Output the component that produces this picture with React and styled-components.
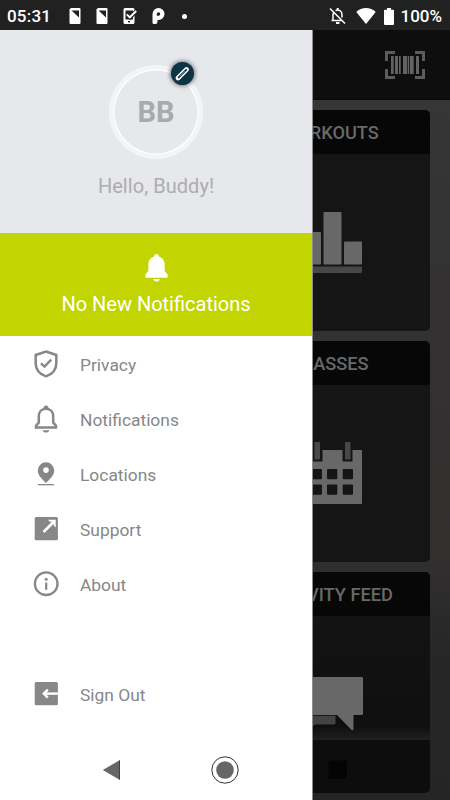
import React from 'react';
import styled, { createGlobalStyle } from 'styled-components';

const GlobalStyle = createGlobalStyle`
  * {
    box-sizing: border-box;
  }
  body {
    margin: 0;
    font-family: Roboto, 'Liberation Sans', sans-serif;
  }
`;

const StyledScreen = styled.div`
  position: relative;
  display: flex;
  flex-direction: column;
  width: 450px;
  height: 800px;
  overflow: hidden;
  background-color: #2b2b2b;
`;

const StyledStatusBar = styled.div`
  display: flex;
  align-items: center;
  justify-content: space-between;
  flex-shrink: 0;
  height: 30px;
  padding: 2px 8px 0 7px;
  background-color: #212121;
  color: #fff;
  font-size: 17px;
  font-weight: 500;
  line-height: 28px;
`;

const StyledStatusGroup = styled.div`
  display: flex;
  align-items: center;

  svg {
    display: block;
  }
`;

const StyledTime = styled.span`
  width: 60px;
  letter-spacing: 0.2px;
`;

const StyledTrayIcons = styled(StyledStatusGroup)`
  gap: 15px;
  margin-left: 1.5px;
`;

const StyledDot = styled.span`
  width: 5px;
  height: 5px;
  margin-left: 2px;
  border-radius: 50%;
  background-color: #fff;
`;

const StyledIndicators = styled(StyledStatusGroup)`
  gap: 8px;

  svg:first-child {
    margin-right: 2px;
  }
  svg + span {
    margin-left: -2px;
  }
`;

const StyledAppHeader = styled.div`
  display: flex;
  flex-shrink: 0;
  align-items: center;
  justify-content: flex-end;
  height: 70px;
  padding-right: 25px;
  background-color: #0e0e0e;
  border-bottom: 1px solid #080808;
`;

const StyledDashboard = styled.div`
  display: flex;
  flex: 1;
  flex-direction: column;
  align-items: flex-end;
  gap: 10px;
  padding: 10px 20px 7px 0;
  background: linear-gradient(#363636 0, #333131 30%, #322f2f 65%, #262626 80%, #252525 100%);
`;

const StyledCard = styled.div`
  display: flex;
  flex-direction: column;
  width: 200px;
  height: 221px;
  overflow: hidden;
  border-radius: 5px;
  background: ${(props) => props.$background || '#151515'};
`;

const StyledCardTitle = styled.div`
  height: 44px;
  background-color: #070707;
  color: #696969;
  font-size: 18.2px;
  font-weight: 500;
  line-height: 46px;
  text-align: center;
  white-space: nowrap;
`;

const StyledCardBody = styled.div`
  display: flex;
  justify-content: center;
  padding-top: ${(props) => props.$top}px;
`;

const StyledDrawer = styled.div`
  position: absolute;
  top: 30px;
  left: 0;
  bottom: 0;
  display: flex;
  flex-direction: column;
  width: 313px;
  background-color: #fff;
  border-right: 1px solid rgba(0, 0, 0, 0.45);
`;

const StyledProfile = styled.div`
  display: flex;
  flex-direction: column;
  align-items: center;
  height: 203px;
  padding-top: 35px;
  background-color: #e7e8ec;
`;

const StyledAvatar = styled.div`
  position: relative;
  display: flex;
  align-items: center;
  justify-content: center;
  width: 94px;
  height: 94px;
  border: 4px solid #f3f4f6;
  border-radius: 50%;
  box-shadow: inset 0 0 0 1.5px #fff;
  color: #a9aaab;
  font-size: 29px;
  font-weight: 700;
`;

const StyledEditBadge = styled.div`
  position: absolute;
  top: -7px;
  right: 5px;
  display: flex;
  align-items: center;
  justify-content: center;
  width: 23px;
  height: 23px;
  border-radius: 50%;
  background-color: #0d3344;
  box-shadow: 0 0 4px 1px rgba(0, 0, 0, 0.5);
`;

const StyledGreeting = styled.div`
  margin-top: 15px;
  color: #adadae;
  font-size: 20px;
  line-height: 24px;
  letter-spacing: 0.05px;
`;

const StyledNotice = styled.div`
  display: flex;
  flex-direction: column;
  align-items: center;
  height: 103px;
  padding-top: 21px;
  background-color: #c2d500;
  color: #fff;
  font-size: 20px;
  line-height: 24px;
`;

const StyledNoticeText = styled.div`
  margin-top: 10px;
`;

const StyledMenu = styled.div`
  display: flex;
  flex-direction: column;
`;

const StyledMenuItem = styled.div`
  display: flex;
  align-items: center;
  height: 55px;
  margin-top: ${(props) => props.$gap || 0}px;
  padding-left: 32px;
  color: #868788;
  font-size: 17.4px;

  svg {
    flex-shrink: 0;
    margin-right: 20px;
  }
`;

const StyledMenuLabel = styled.span`
  padding-top: 2px;
`;

const StyledNavBar = styled.div`
  position: absolute;
  left: 0;
  right: 0;
  bottom: 0;
  display: flex;
  align-items: center;
  justify-content: space-between;
  height: 60px;
  padding: 0 102px;
`;

const SimIcon = () => (
  <svg width="12" height="16" viewBox="0 0 12 16">
    <path d="M2 0h8.500a1 1 0 0 1 1 1v14a1 1 0 0 1-1 1H1.500a1 1 0 0 1-1-1V1.500z" fill="#fff" />
    <path d="M2.500 2.500H10v7z" fill="#212121" />
  </svg>
);

const PhoneCheckIcon = () => (
  <svg width="14" height="16" viewBox="0 0 14 16">
    <path
      fillRule="evenodd"
      d="M2 0h8a1.500 1.500 0 0 1 1.500 1.500v13A1.500 1.500 0 0 1 10 16H2a1.500 1.500 0 0 1-1.500-1.500v-13A1.500 1.500 0 0 1 2 0zM2.500 2.500v9H10v-9z"
      fill="#fff"
    />
    <path d="M4 6.500l3 3 6.500-6.500" fill="none" stroke="#212121" strokeWidth="4" />
    <path d="M3.800 6.300l3 3L13.200 3" fill="none" stroke="#fff" strokeWidth="1.900" />
    <rect x="5" y="13" width="2" height="1.400" fill="#212121" />
  </svg>
);

const ParkIcon = () => (
  <svg width="13" height="16" viewBox="0 0 13 16">
    <path
      fillRule="evenodd"
      d="M6.500 0a6 6 0 0 1 0 12H5.500v2a2 2 0 0 1-2 2H1.500A1.500 1.500 0 0 1 .5 14.500V6a6 6 0 0 1 6-6zM6.500 4.300A1.700 1.700 0 0 0 4.800 6v1.700h1.700a1.700 1.700 0 0 0 0-3.400z"
      fill="#fff"
    />
  </svg>
);

const BellOffIcon = () => (
  <svg width="17" height="18" viewBox="0 0 17 18" fill="none" stroke="#fff" strokeWidth="1.500">
    <path d="M4 13V8a4.600 4.600 0 0 1 .8-2.700M6.500 3.600A4.300 4.300 0 0 1 13 7.500v3M2.500 13.500h10" />
    <path d="M8.700 1v2" strokeWidth="2" />
    <path d="M7 16h3.400" strokeWidth="2" />
    <path d="M1 1.500L16 16.500" />
  </svg>
);

const WifiIcon = () => (
  <svg width="20" height="16" viewBox="0 0 20 16">
    <path d="M10 16L.3 4C3 1.300 6.300 0 10 0s7 1.300 9.700 4z" fill="#fff" />
  </svg>
);

const BatteryIcon = () => (
  <svg width="10" height="17" viewBox="0 0 10 17">
    <path
      d="M3 0h4v1.700h2a1 1 0 0 1 1 1V16a1 1 0 0 1-1 1H1a1 1 0 0 1-1-1V2.700a1 1 0 0 1 1-1h2z"
      fill="#fff"
    />
  </svg>
);

const BarcodeIcon = () => (
  <svg width="40" height="28" viewBox="0 0 40 28" fill="#636363">
    <path
      d="M0 10V0h10v3H3v7zM30 0h10v10h-3V3h-7zM3 18v7h7v3H0V18zM37 18h3v10H30v-3h7z"
      fill="#5c5c5c"
    />
    <rect x="6" y="5" width="2.700" height="18" />
    <rect x="10" y="5" width="3" height="18" />
    <rect x="14" y="5" width="1.700" height="18" />
    <rect x="18" y="5" width="4" height="18" />
    <rect x="22.700" y="5" width="1.500" height="18" />
    <rect x="25" y="5" width="3.700" height="18" />
    <rect x="31" y="5" width="3" height="18" />
  </svg>
);

const ChartIcon = () => (
  <svg width="64" height="61" viewBox="0 0 64 61" fill="#686868">
    <rect x="3" y="20" width="20" height="32.500" rx="1" />
    <rect x="25.500" y="0" width="18" height="52.500" rx="1" />
    <rect x="46" y="29.500" width="18" height="23" rx="1" />
    <rect x="0" y="54.500" width="64" height="6.500" rx="1" fill="#474747" />
  </svg>
);

const CalendarIcon = () => (
  <svg width="64" height="62" viewBox="0 0 64 62">
    <rect y="8" width="64" height="54" rx="1" fill="#686868" />
    <g fill="#151515">
      <rect x="14" y="7" width="10.500" height="12.500" />
      <rect x="44.500" y="7" width="10" height="12.500" />
      {[27, 42.5].map((y) =>
        [13.7, 29, 44.7].map((x) => (
          <rect key={`${x}-${y}`} x={x} y={y} width="10.300" height="10.300" rx="1" />
        ))
      )}
    </g>
    <rect x="16.500" y="0" width="5.500" height="17.500" rx="1" fill="#484848" />
    <rect x="47" y="0" width="5.500" height="17.500" rx="1" fill="#484848" />
  </svg>
);

const ChatIcon = () => (
  <svg width="66" height="56" viewBox="0 0 66 56">
    <path d="M1 24h37.500v22a1.500 1.500 0 0 1-1.500 1.500H18L10 55V47.500H1z" fill="#434343" />
    <path
      d="M15 0h50a1 1 0 0 1 1 1v36a1 1 0 0 1-1 1h-8.500v14.500q-1 1.500-2.500 0L40 38H15z"
      fill="#686868"
      stroke="#0c0c0c"
      strokeWidth="1.500"
      paintOrder="stroke"
    />
  </svg>
);

const PencilIcon = () => (
  <svg width="15" height="15" viewBox="0 0 15 15" fill="none">
    <path d="M3 12l8.500-8.500" stroke="#fff" strokeWidth="4.600" strokeLinecap="round" />
    <path d="M3.600 11.400l7.600-7.600" stroke="#0d3344" strokeWidth="1.900" strokeLinecap="round" />
    <path d="M4.500 10.500l5.500-5.500" stroke="#8fa0a8" strokeWidth=".6" />
  </svg>
);

const BellIcon = () => (
  <svg width="23" height="28" viewBox="0 0 24 29" fill="#fff">
    <path d="M9.500 2.500a2.500 2.500 0 0 1 5 0C18.500 3.700 20.500 7 20.500 11v6.700l3 3.300v3.700H.5V21l3-3.300V11c0-4 2-7.300 6-8.500z" />
    <path d="M8.500 25.900h7c-.5 1.600-1.900 2.800-3.500 2.800s-3-1.200-3.500-2.800z" />
  </svg>
);

const ShieldIcon = () => (
  <svg width="28" height="28" viewBox="0 0 28 28" fill="none" stroke="currentColor">
    <path
      d="M14 1.500L24.300 5v8.500c0 6-4.300 10.700-10.300 12.900C8 24.200 3.700 19.500 3.700 13.500V5z"
      strokeWidth="2.500"
    />
    <path d="M9 13.300l3.500 3.300 6.700-7" strokeWidth="2.400" />
  </svg>
);

const BellOutlineIcon = () => (
  <svg width="28" height="28" viewBox="0 0 28 28" fill="none" stroke="currentColor">
    <path
      d="M4 22.600v-1.800l2.800-3.300V11.500c0-4.500 2.800-7.700 7.200-7.700s7.200 3.200 7.200 7.700v6l2.800 3.300v1.800z"
      strokeWidth="2.500"
    />
    <path d="M11.500 3a2.500 2.500 0 0 1 5 0z" fill="currentColor" stroke="none" />
    <path d="M10.500 25.200h7c-.6 1.500-2 2.300-3.500 2.300s-2.900-.8-3.500-2.300z" fill="currentColor" stroke="none" />
  </svg>
);

const PinIcon = () => (
  <svg width="28" height="28" viewBox="0 0 28 28" fill="currentColor">
    <path
      fillRule="evenodd"
      d="M14 2.300a8.200 8.200 0 0 1 8.200 8.200c0 5.300-5.200 9-8.200 12.800-3-3.800-8.200-7.500-8.200-12.800A8.200 8.200 0 0 1 14 2.300zm0 5a2.800 2.800 0 1 0 0 5.600 2.800 2.800 0 0 0 0-5.600z"
    />
    <rect x="6" y="24" width="16" height="1.300" />
  </svg>
);

const ExternalIcon = () => (
  <svg width="28" height="28" viewBox="0 0 28 28">
    <rect x="2.700" y="2" width="23.200" height="23.200" rx="1.500" fill="currentColor" />
    <path d="M11.500 17L22 6.500" fill="none" stroke="#fff" strokeWidth="2.600" />
    <path d="M16 4.800h7.700v7.700l-2-2V6.800H18z" fill="#fff" />
  </svg>
);

const InfoIcon = () => (
  <svg width="28" height="28" viewBox="0 0 28 28">
    <circle cx="14.200" cy="13.700" r="11.300" fill="none" stroke="currentColor" strokeWidth="2.300" />
    <rect x="13.100" y="12.500" width="2.200" height="7.300" fill="currentColor" />
    <circle cx="14.200" cy="9.200" r="1.500" fill="currentColor" />
  </svg>
);

const SignOutIcon = () => (
  <svg width="28" height="28" viewBox="0 0 28 28">
    <rect x="2.700" y="2" width="23.200" height="23.200" rx="1.500" fill="currentColor" />
    <path d="M12 13.600h14.500" fill="none" stroke="#fff" strokeWidth="2.400" />
    <path d="M15.800 9.600l-4 4 4 4" fill="none" stroke="#fff" strokeWidth="2.400" />
  </svg>
);

const menuItems = [
  { label: 'Privacy', Icon: ShieldIcon },
  { label: 'Notifications', Icon: BellOutlineIcon },
  { label: 'Locations', Icon: PinIcon },
  { label: 'Support', Icon: ExternalIcon },
  { label: 'About', Icon: InfoIcon },
  { label: 'Sign Out', Icon: SignOutIcon, gap: 55 },
];

const cards = [
  { title: 'WORKOUTS', Icon: ChartIcon, top: 58 },
  { title: 'CLASSES', Icon: CalendarIcon, top: 57 },
  {
    title: 'ACTIVITY FEED',
    Icon: ChatIcon,
    top: 61,
    background: 'linear-gradient(#151515 0, #0f0f0f 154px, #202020 168px, #0d0d0d 168px)',
  },
];

const StatusBar = () => (
  <StyledStatusBar>
    <StyledStatusGroup>
      <StyledTime>05:31</StyledTime>
      <StyledTrayIcons>
        <SimIcon />
        <SimIcon />
        <PhoneCheckIcon />
        <ParkIcon />
        <StyledDot />
      </StyledTrayIcons>
    </StyledStatusGroup>
    <StyledIndicators>
      <BellOffIcon />
      <WifiIcon />
      <BatteryIcon />
      <span>100%</span>
    </StyledIndicators>
  </StyledStatusBar>
);

const NavBar = () => (
  <StyledNavBar>
    <svg width="20" height="22" viewBox="0 0 20 22">
      <path d="M.8 11L17.500 1.300v19.400z" fill="#666" />
      <path d="M17.500 1.300v19.400" stroke="#333" strokeWidth=".9" />
    </svg>
    <svg width="28" height="28" viewBox="0 0 28 28">
      <circle cx="14" cy="14" r="13.200" fill="none" stroke="#333" strokeWidth="1" />
      <circle cx="14" cy="14" r="8.800" fill="#666" />
    </svg>
    <svg width="20" height="20" viewBox="0 0 20 20">
      <rect x=".5" y=".5" width="18.500" height="18.500" rx="1.500" fill="#040404" />
    </svg>
  </StyledNavBar>
);

const App = () => (
  <>
    <GlobalStyle />
    <StyledScreen>
      <StatusBar />
      <StyledAppHeader>
        <BarcodeIcon />
      </StyledAppHeader>
      <StyledDashboard>
        {cards.map(({ title, Icon, top, background }) => (
          <StyledCard key={title} $background={background}>
            <StyledCardTitle>{title}</StyledCardTitle>
            <StyledCardBody $top={top}>
              <Icon />
            </StyledCardBody>
          </StyledCard>
        ))}
      </StyledDashboard>
      <StyledDrawer>
        <StyledProfile>
          <StyledAvatar>
            BB
            <StyledEditBadge>
              <PencilIcon />
            </StyledEditBadge>
          </StyledAvatar>
          <StyledGreeting>Hello, Buddy!</StyledGreeting>
        </StyledProfile>
        <StyledNotice>
          <BellIcon />
          <StyledNoticeText>No New Notifications</StyledNoticeText>
        </StyledNotice>
        <StyledMenu>
          {menuItems.map(({ label, Icon, gap }) => (
            <StyledMenuItem key={label} $gap={gap}>
              <Icon />
              <StyledMenuLabel>{label}</StyledMenuLabel>
            </StyledMenuItem>
          ))}
        </StyledMenu>
      </StyledDrawer>
      <NavBar />
    </StyledScreen>
  </>
);

export default App;
